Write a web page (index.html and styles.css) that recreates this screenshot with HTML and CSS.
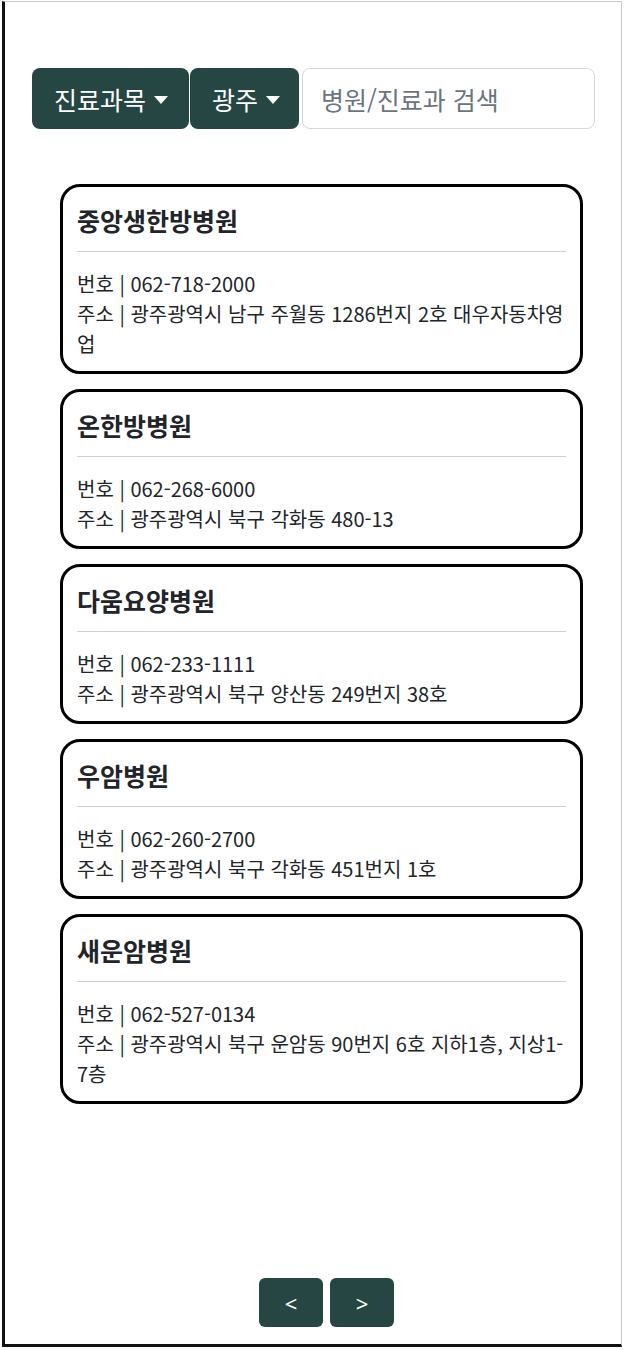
FILE: index.html
```html
<!DOCTYPE html>
<html lang="ko">
<head>
<meta charset="utf-8">
<link rel="stylesheet" href="styles.css">
</head>
<body>
<div class="frame">
  <div class="search-bar">
    <button class="drop drop-dept">진료과목<span class="caret"></span></button>
    <button class="drop drop-region">광주<span class="caret"></span></button>
    <input class="search" type="text" placeholder="병원/진료과 검색">
  </div>
  <div class="list">
    <div class="card">
      <div class="name">중앙생한방병원</div>
      <hr class="line">
      <div class="info">번호 | 062-718-2000</div>
      <div class="info">주소 | 광주광역시 남구 주월동 1286번지 2호 대우자동차영업</div>
    </div>
    <div class="card">
      <div class="name">온한방병원</div>
      <hr class="line">
      <div class="info">번호 | 062-268-6000</div>
      <div class="info">주소 | 광주광역시 북구 각화동 480-13</div>
    </div>
    <div class="card">
      <div class="name">다움요양병원</div>
      <hr class="line">
      <div class="info">번호 | 062-233-1111</div>
      <div class="info">주소 | 광주광역시 북구 양산동 249번지 38호</div>
    </div>
    <div class="card">
      <div class="name">우암병원</div>
      <hr class="line">
      <div class="info">번호 | 062-260-2700</div>
      <div class="info">주소 | 광주광역시 북구 각화동 451번지 1호</div>
    </div>
    <div class="card">
      <div class="name">새운암병원</div>
      <hr class="line">
      <div class="info">번호 | 062-527-0134</div>
      <div class="info">주소 | 광주광역시 북구 운암동 90번지 6호 지하1층, 지상1-7층</div>
    </div>
  </div>
  <div class="pager">
    <button class="page-btn">&lt;</button>
    <button class="page-btn">&gt;</button>
  </div>
</div>
</body>
</html>
```

FILE: styles.css
```css
* { box-sizing: border-box; }
html, body { margin: 0; padding: 0; background: #fff; }
body {
  font-family: "Noto Sans CJK KR", "Noto Sans", sans-serif;
  color: #212529;
}
.frame {
  margin: 1px 0 0 2px;
  width: 620px;
  height: 1346px;
  border-top: 1px solid #c8c8c8;
  border-right: 1px solid #c8c8c8;
  border-left: 3px solid #111;
  border-bottom: 3px solid #111;
  display: flex;
  flex-direction: column;
  padding: 66px 0 17px 0;
}
.search-bar {
  display: flex;
  align-items: stretch;
  height: 61px;
  margin-left: 27px;
}
.drop {
  background: #264643;
  color: #fff;
  border: none;
  border-radius: 8px;
  font-family: inherit;
  font-size: 25px;
  display: flex;
  align-items: center;
  padding: 0 0 0 22px;
  margin: 0;
}
.drop-dept { width: 157px; }
.drop-region { width: 109px; margin-left: 1px; }
.caret {
  display: inline-block;
  width: 0; height: 0;
  border-left: 7px solid transparent;
  border-right: 7px solid transparent;
  border-top: 8px solid #fff;
  margin-left: 8px;
  margin-top: 2px;
}
.search {
  margin-left: 3px;
  width: 293px;
  border: 1.5px solid #d4d7db;
  border-radius: 8px;
  font-family: inherit;
  font-size: 25px;
  padding: 0 18px;
  color: #212529;
  outline: none;
}
.search::placeholder { color: #6c757d; }
.list {
  margin: 55px 0 0 55px;
  width: 523px;
  display: flex;
  flex-direction: column;
  gap: 15px;
}
.card {
  border: 3px solid #000;
  border-radius: 20px;
  padding: 18px 14px 12px 14px;
}
.name {
  font-size: 25px;
  font-weight: 700;
  line-height: 30px;
  color: #212529;
}
.line {
  border: none;
  border-top: 1px solid #cfcfcf;
  margin: 16px 0 17px 0;
  height: 0;
}
.info {
  font-size: 20px;
  line-height: 30px;
  color: #212529;
}
.pager {
  margin-top: auto;
  display: flex;
  gap: 7px;
  padding-left: 254px;
}
.page-btn {
  width: 64px;
  height: 49px;
  background: #264643;
  color: #fff;
  border: none;
  border-radius: 6px;
  font-family: "Noto Sans", sans-serif;
  font-size: 22px;
  padding: 0;
}
```
